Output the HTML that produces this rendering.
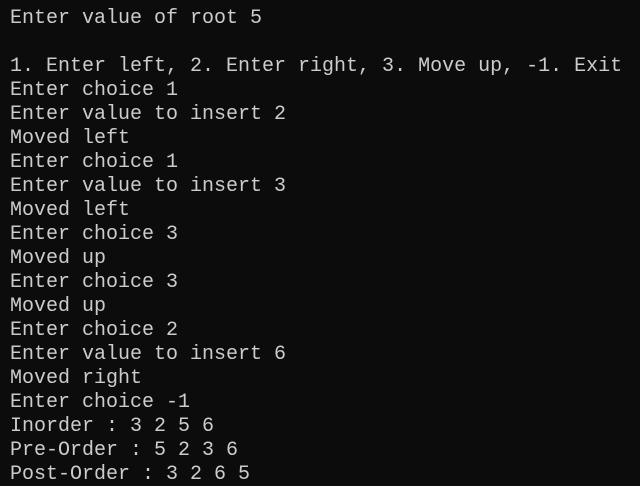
<!DOCTYPE html>
<html><head><style>
html,body{margin:0;padding:0;background:#0c0c0c;width:640px;height:486px;overflow:hidden}
pre{margin:0;padding:7px 0 0 10px;font-family:"Liberation Mono",monospace;font-size:20px;line-height:24px;color:#cccccc}
</style></head><body><pre>Enter value of root 5

1. Enter left, 2. Enter right, 3. Move up, -1. Exit
Enter choice 1
Enter value to insert 2
Moved left
Enter choice 1
Enter value to insert 3
Moved left
Enter choice 3
Moved up
Enter choice 3
Moved up
Enter choice 2
Enter value to insert 6
Moved right
Enter choice -1
Inorder : 3 2 5 6
Pre-Order : 5 2 3 6
Post-Order : 3 2 6 5</pre></body></html>
